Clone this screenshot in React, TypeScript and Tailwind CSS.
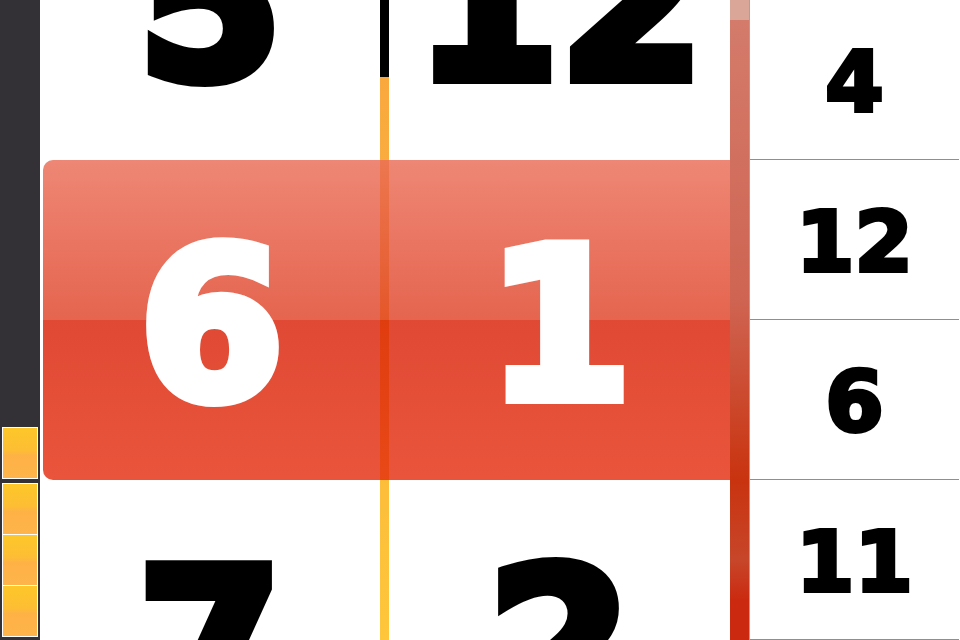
import React from 'react'

const left = ['5', '6', '7']
const right = ['12', '1', '2']
const list = ['4', '12', '6', '11']

function Digit({ value, white }: { value: string; white?: boolean }) {
  return (
    <div
      className={
        white
          ? 'flex h-[320px] items-center justify-center pt-[12px] font-["DejaVu_Sans",sans-serif] text-[208px] font-bold leading-none text-white [-webkit-text-stroke:12px_#fff]'
          : 'flex h-[320px] items-center justify-center pt-[12px] font-["DejaVu_Sans",sans-serif] text-[208px] font-bold leading-none text-black [-webkit-text-stroke:12px_#000]'
      }
    >
      {value}
    </div>
  )
}

function YellowBox() {
  return <div className="h-[50px] bg-[linear-gradient(to_bottom,#fdc829_0%,#fdbd35_45%,#feb246_55%,#feb44b_100%)]" />
}

export default function App() {
  return (
    <div className="relative flex h-[640px] w-[960px] overflow-hidden bg-white">
      {/* sidebar */}
      <div className="flex w-[40px] flex-col justify-end bg-[#333135] px-[2px] pb-[3px]">
        <div className="mb-[4px] border border-white">
          <YellowBox />
        </div>
        <div className="flex flex-col gap-px border border-white bg-white">
          <YellowBox />
          <YellowBox />
          <YellowBox />
        </div>
      </div>

      {/* picker wheels */}
      <div className="w-[340px]">
        <div className="-mt-[160px]">
          <Digit value={left[0]} />
          <div className="h-[320px]" />
          <Digit value={left[2]} />
        </div>
      </div>
      <div className="flex w-[9px] flex-col">
        <div className="h-[77px] bg-black" />
        <div className="flex-1 bg-[linear-gradient(to_bottom,#f9a83e,#fec63a)]" />
      </div>
      <div className="w-[341px]">
        <div className="-mt-[160px]">
          <Digit value={right[0]} />
          <div className="h-[320px]" />
          <Digit value={right[2]} />
        </div>
      </div>

      {/* scroll strip */}
      <div className="w-[20px] border-r border-[#a3a3a3] bg-[linear-gradient(to_bottom,#d9a697_0px,#d9a697_20px,#d47b6b_20px,#cf6452_300px,#c9330f_480px,#c7462a_560px,#cb2a10_600px,#cb2a10_100%)]" />

      {/* list */}
      <div className="flex w-[209px] flex-col">
        {list.map((n, i) => (
          <div
            key={i}
            className="flex h-[160px] shrink-0 items-center justify-center border-b border-[#8f8f8f] pt-[4px] font-['DejaVu_Sans',sans-serif] text-[84px] font-bold leading-none text-black [-webkit-text-stroke:4px_#000]"
          >
            {n}
          </div>
        ))}
      </div>

      {/* selection band */}
      <div className="absolute left-[43px] top-[160px] flex h-[320px] w-[687px] rounded-l-[10px] bg-[linear-gradient(to_bottom,rgba(234,107,85,0.81)_0%,rgba(223,65,38,0.81)_50%,rgba(217,32,6,0.81)_50%,rgba(228,45,14,0.81)_100%)]">
        <div className="w-[337px]">
          <Digit value={left[1]} white />
        </div>
        <div className="w-[9px]" />
        <div className="flex-1">
          <Digit value={right[1]} white />
        </div>
      </div>
    </div>
  )
}
